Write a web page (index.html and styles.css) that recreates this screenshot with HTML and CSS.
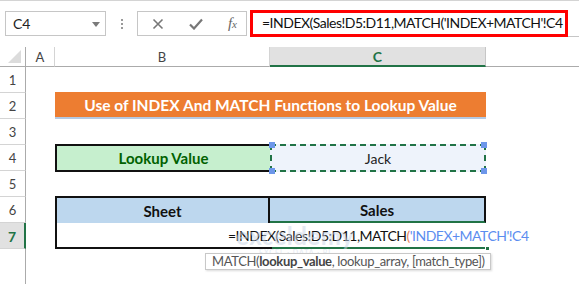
FILE: index.html
```html
<!DOCTYPE html>
<html>
<head>
<meta charset="utf-8">
<link rel="stylesheet" href="styles.css">
</head>
<body>
<div class="app">
  <div class="topbar">
    <div class="namebox"><span>C4</span><svg class="dd" width="8" height="5" viewBox="0 0 8 5"><path d="M0 0h8L4 5z" fill="#7a7a7a"/></svg></div>
    <div class="dots"><i></i><i></i><i></i></div>
    <div class="fbtns">
      <svg width="12" height="12" viewBox="0 0 12 12"><path d="M1.5 1.5l9 9M10.5 1.5l-9 9" stroke="#777" stroke-width="1.6" fill="none"/></svg>
      <svg width="14" height="12" viewBox="0 0 14 12"><path d="M1 6.5l4 4L13 1.5" stroke="#777" stroke-width="2.2" fill="none"/></svg>
      <span class="fx">f<sub>x</sub></span>
    </div>
    <div class="finput">
      <div class="redbox">=INDEX(Sales!D5:D11,MATCH('INDEX+MATCH'!C4</div>
    </div>
  </div>

  <div class="sheet">
    <div class="corner"><svg width="13" height="13" viewBox="0 0 13 13"><path d="M13 0V13H0z" fill="#dcdcdc"/></svg></div>
    <div class="ch">A</div>
    <div class="ch">B</div>
    <div class="ch sel">C</div>
    <div class="ch last"></div>

    <div class="rh">1</div><div class="row-rest"></div>
    <div class="rh">2</div><div class="cellA"></div><div class="title">Use of INDEX And MATCH Functions to Lookup Value</div><div class="cellD"></div>
    <div class="rh">3</div><div class="row-rest"></div>
    <div class="rh">4</div><div class="cellA"></div>
    <div class="lookup">Lookup Value</div>
    <div class="jack">Jack<i class="h tl"></i><i class="h tr"></i><i class="h bl"></i><i class="h br"></i></div>
    <div class="cellD"></div>
    <div class="rh">5</div><div class="row-rest"></div>
    <div class="rh">6</div><div class="cellA"></div>
    <div class="thb">Sheet</div>
    <div class="thc">Sales</div>
    <div class="cellD"></div>
    <div class="rh sel">7</div><div class="cellA"></div>
    <div class="edit"><span>=INDEX(Sales!D5:D11,MATCH<span class="paren">(</span><span class="ref">'INDEX+MATCH'!C4</span></span><i class="fill"></i></div>
    <div class="rh blank"></div><div class="row-rest"></div>
  </div>

  <div class="watermark"><b>exceldemy</b><small>EXCEL · DATA · BI</small></div>
  <div class="tip">MATCH(<b>lookup_value</b>, lookup_array, [match_type])</div>
</div>
</body>
</html>
```

FILE: styles.css
```css
* { box-sizing: border-box; }
html, body { margin: 0; padding: 0; }
body {
  width: 579px; height: 284px; overflow: hidden; background: #fff;
  font-family: Lato, "Liberation Sans", sans-serif; color: #222;
}
.app { position: relative; width: 579px; height: 284px; overflow: hidden; }

.topbar {
  height: 47px; display: flex; align-items: flex-start;
  padding: 10px 0 0 5px; border-top: 1px solid #d4d4d4;
}
.namebox {
  width: 101px; height: 25px; border: 1px solid #c6c6c6;
  display: flex; align-items: center; justify-content: space-between;
  padding: 0 5px 0 7px; font-size: 14px; color: #222;
}
.namebox .dd { margin-top: 1px; }
.dots { width: 31px; height: 26px; display: flex; flex-direction: column; align-items: center; justify-content: center; gap: 2px; }
.dots i { width: 2px; height: 2px; background: #9a9a9a; display: block; }
.fbtns {
  width: 110px; height: 25px; border: 1px solid #c6c6c6;
  display: flex; align-items: center; justify-content: space-between; padding: 0 9px 0 14px;
}
.fx { font-family: "Liberation Serif", serif; font-style: italic; color: #666; font-size: 15px; line-height: 1; }
.fx sub { font-size: 11px; vertical-align: 0; }
.finput { flex: 1; margin-left: 3px; margin-top: -1px; height: 27px; border-bottom: 1px solid #c6c6c6; }
.redbox {
  width: 318px; height: 27px; border: 3px solid #ff0000;
  font-size: 14px; letter-spacing: -0.5px; line-height: 20px; padding-left: 9px; color: #111; white-space: nowrap;
}

.sheet {
  display: grid;
  grid-template-columns: 26px 29px 215px 216px 93px;
  grid-template-rows: 20px repeat(7, 26px) 35px;
}
.corner { border-right: 1px solid #ababab; border-bottom: 1px solid #ababab; display: flex; align-items: flex-end; justify-content: flex-end; padding: 0 4px 3px 0; }
.ch {
  border-bottom: 1px solid #ababab; border-right: 1px solid #d4d4d4;
  display: flex; align-items: center; justify-content: center;
  font-size: 13px; color: #444; padding-top: 1px;
}
.ch.sel { background: #e1e1e1; color: #217346; font-weight: bold; border-bottom: 2px solid #217346; border-right: 1px solid #c6c6c6; font-size: 14px; }
.ch.last { border-right: none; }
.rh {
  border-right: 1px solid #ababab; border-bottom: 1px solid #d4d4d4;
  display: flex; align-items: center; justify-content: center;
  font-size: 13px; color: #444; padding-top: 1px;
}
.rh.sel { background: #e1e1e1; color: #217346; font-weight: bold; border-right: 2px solid #217346; font-size: 14px; }
.rh.blank { border-bottom: none; }
.row-rest { grid-column: 2 / 6; }

.title {
  grid-column: 3 / 5; background: #ed7d31; color: #fff; font-weight: bold;
  font-size: 15.5px; display: flex; align-items: center; justify-content: center;
  border-bottom: 2px solid #b4c9e3; margin-top: -1px; padding-top: 1px;
}
.lookup {
  background: #c6efce; color: #006100; font-weight: bold; font-size: 15px;
  border: 2px solid #111; border-right: none; margin-top: -1px; margin-bottom: -1px;
  display: flex; align-items: center; justify-content: center;
}
.jack {
  position: relative; background: #eef3fb; font-size: 14px; color: #222;
  margin-top: -1px; margin-bottom: -1px;
  border: 2px dashed #217346;
  display: flex; align-items: center; justify-content: center;
}
.h { position: absolute; width: 6px; height: 6px; background: #6d97ea; display: block; }
.h.tl { left: -3px; top: -4px; }
.h.tr { right: -3px; top: -4px; }
.h.bl { left: -3px; bottom: -4px; }
.h.br { right: -3px; bottom: -4px; }

.thb, .thc {
  background: #bdd7ee; font-weight: bold; font-size: 15px; color: #111;
  border-top: 2px solid #111; margin-top: -1px;
  display: flex; align-items: center; justify-content: center;
}
.thb { border-left: 2px solid #111; border-right: 2px solid #111; }
.thc { border-right: 2px solid #111; border-bottom: 2px solid #217346; }

.edit {
  grid-column: 3 / 6; position: relative; margin-top: -1px; height: 27px;
  border-left: 2px solid #111;
  font-size: 14px; letter-spacing: -0.5px; color: #111; white-space: nowrap;
  display: flex; align-items: center; padding-left: 171px;
}
.edit::after {
  content: ""; position: absolute; left: 0; bottom: 0; width: 215px; height: 2px; background: #111;
}
.edit::before {
  content: ""; position: absolute; left: 215px; bottom: 0; width: 214px; height: 2px; background: #217346;
}
.paren { color: #e8805a; }
.ref { color: #5b8def; }
.fill { position: absolute; left: 428px; bottom: -2px; width: 5px; height: 5px; background: #217346; border: 1px solid #fff; display: block; }

.watermark {
  position: absolute; left: 236px; top: 224px; color: #c9d4e6; opacity: 0.5;
  display: flex; flex-direction: column; align-items: center; line-height: 1;
}
.watermark b { font-size: 24px; font-weight: bold; letter-spacing: 0.5px; }
.watermark small { font-size: 7px; letter-spacing: 1px; margin-top: 1px; }

.tip {
  position: absolute; left: 205px; top: 253px; width: 286px; height: 17px;
  background: #fff; border: 1px solid #c8c8c8; box-shadow: 1px 1px 2px rgba(0,0,0,0.15);
  font-size: 13px; letter-spacing: -0.35px; color: #555; line-height: 15px; padding-left: 6px; white-space: nowrap;
}
.tip b { color: #444; }
```
